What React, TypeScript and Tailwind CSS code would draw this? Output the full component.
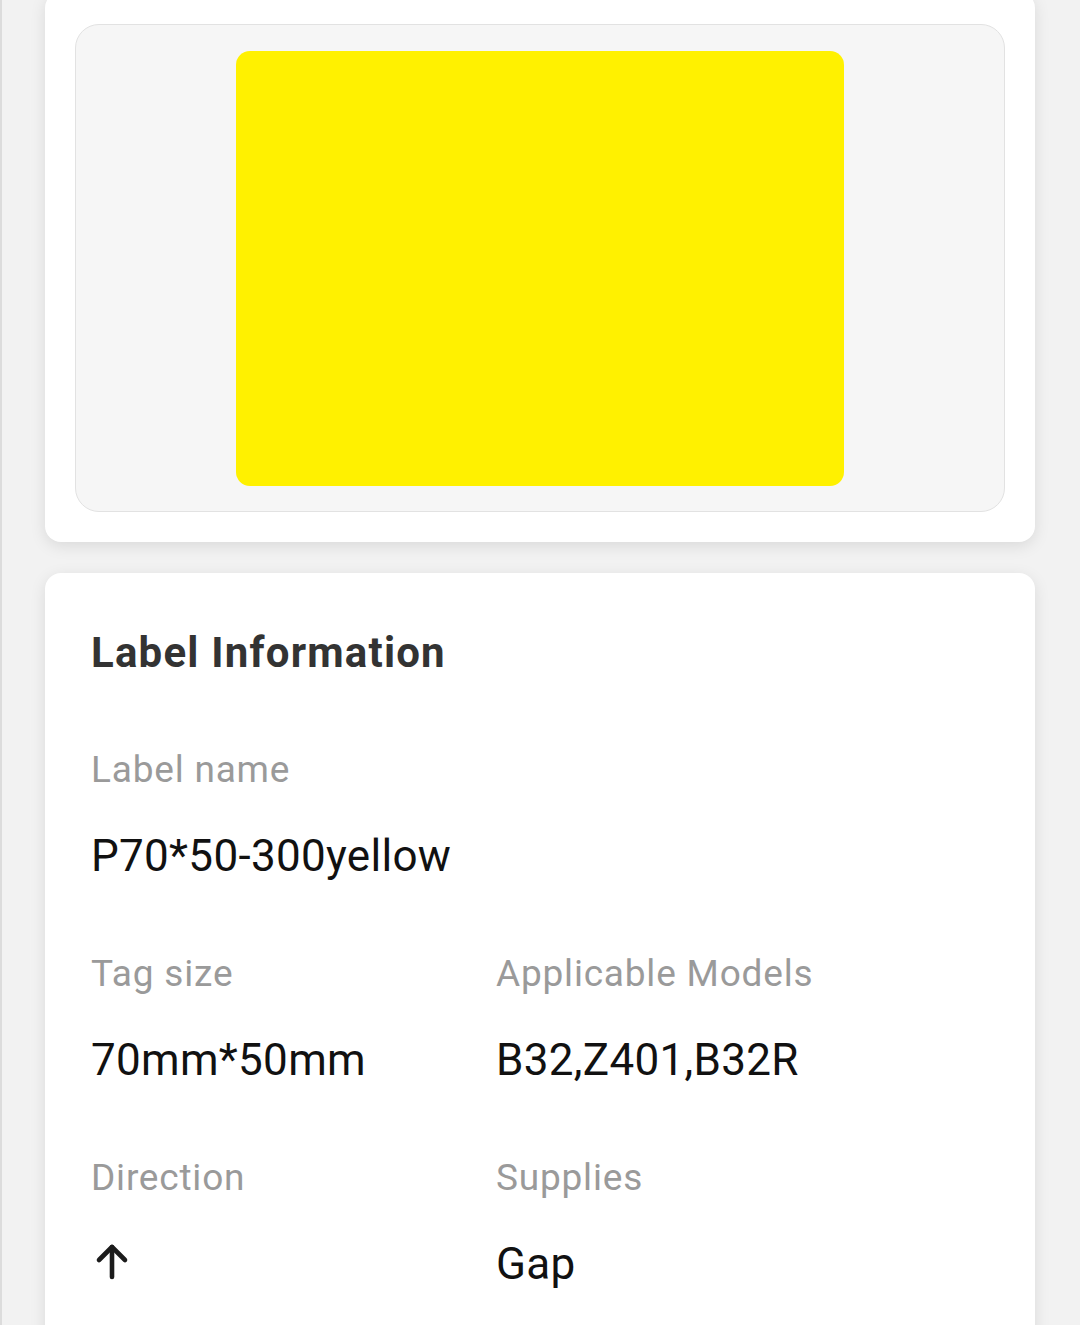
const font = { fontFamily: 'Roboto, "Noto Sans", sans-serif' };

type Field = { label: string; value: React.ReactNode };

function ArrowUp() {
  return (
    <svg width="40" height="40" viewBox="0 0 40 40" fill="none" stroke="#1c1c1c" strokeWidth="4.6" strokeLinecap="round" strokeLinejoin="round" className="ml-[1px] mt-[1px]">
      <path d="M20 36V6" />
      <path d="M7 19L20 6l13 13" />
    </svg>
  );
}

function InfoField({ label, value }: Field) {
  return (
    <div className="flex flex-col">
      <div className="text-[37px] leading-[40px] tracking-[0.8px] text-[#9a9a9a]">{label}</div>
      <div className="mt-[42px] h-[48px] text-[44px] leading-[48px] tracking-[0.3px] text-[#111]">{value}</div>
    </div>
  );
}

export default function App() {
  return (
    <div className="min-h-[1325px] overflow-hidden bg-[#f2f2f2] border-l-2 border-[#dcdcdc] pl-[43px] pr-[45px]" style={font}>
      {/* preview card */}
      <div className="-mt-[8px] rounded-[16px] bg-white px-[30px] pt-[32px] pb-[30px] shadow-[0_4px_16px_rgba(0,0,0,0.1)]">
        <div className="flex h-[488px] items-center justify-center rounded-[24px] border border-[#e2e2e2] bg-[#f6f6f6]">
          <div className="h-[435px] w-[608px] rounded-[14px] bg-[#fff100]" />
        </div>
      </div>

      {/* info card */}
      <div className="mt-[31px] rounded-[16px] bg-white pl-[46px] pr-[40px] pt-[56px] pb-[60px] shadow-[0_4px_16px_rgba(0,0,0,0.1)]">
        <h2 className="text-[42px] font-bold leading-[48px] tracking-[1.2px] text-[#333]">Label Information</h2>
        <div className="mt-[73px]">
          <InfoField label="Label name" value="P70*50-300yellow" />
        </div>
        <div className="mt-[74px] grid grid-cols-[405px_1fr] gap-y-[74px]">
          <InfoField label="Tag size" value="70mm*50mm" />
          <InfoField label="Applicable Models" value="B32,Z401,B32R" />
          <InfoField label="Direction" value={<ArrowUp />} />
          <InfoField label="Supplies" value="Gap" />
        </div>
      </div>
    </div>
  );
}
